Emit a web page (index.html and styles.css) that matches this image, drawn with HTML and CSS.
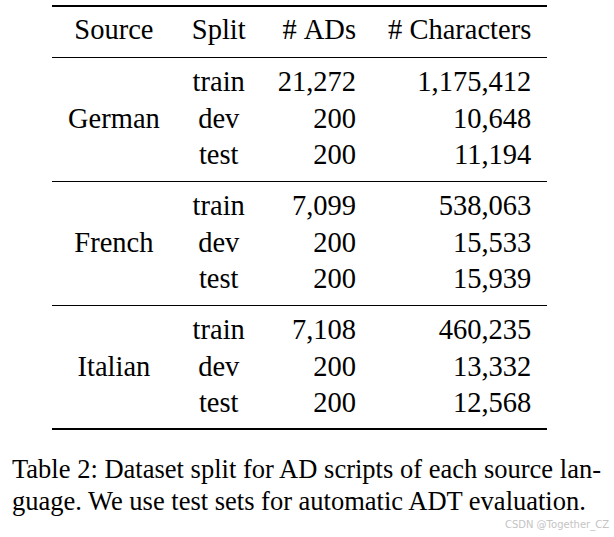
FILE: index.html
```html
<!DOCTYPE html>
<html>
<head>
<meta charset="utf-8">
<link rel="stylesheet" href="styles.css">
</head>
<body>
<div class="page">
  <table class="data">
    <thead>
      <tr><th class="c">Source</th><th class="c">Split</th><th class="r">#&nbsp;ADs</th><th class="r">#&nbsp;Characters</th></tr>
    </thead>
    <tbody>
      <tr class="first"><td class="c group" rowspan="3">German</td><td class="c">train</td><td class="r">21,272</td><td class="r">1,175,412</td></tr>
      <tr><td class="c">dev</td><td class="r">200</td><td class="r">10,648</td></tr>
      <tr class="last"><td class="c">test</td><td class="r">200</td><td class="r">11,194</td></tr>
    </tbody>
    <tbody>
      <tr class="first"><td class="c group" rowspan="3">French</td><td class="c">train</td><td class="r">7,099</td><td class="r">538,063</td></tr>
      <tr><td class="c">dev</td><td class="r">200</td><td class="r">15,533</td></tr>
      <tr class="last"><td class="c">test</td><td class="r">200</td><td class="r">15,939</td></tr>
    </tbody>
    <tbody class="end">
      <tr class="first"><td class="c group" rowspan="3">Italian</td><td class="c">train</td><td class="r">7,108</td><td class="r">460,235</td></tr>
      <tr><td class="c">dev</td><td class="r">200</td><td class="r">13,332</td></tr>
      <tr class="last"><td class="c">test</td><td class="r">200</td><td class="r">12,568</td></tr>
    </tbody>
  </table>
  <div class="caption">
    <div class="line1">Table 2: Dataset split for AD scripts of each source lan-</div>
    <div class="line2">guage. We use test sets for automatic ADT evaluation.</div>
  </div>
  <div class="mark">CSDN @Together_CZ</div>
</div>
</body>
</html>
```
FILE: styles.css
```css
html, body {
  margin: 0;
  padding: 0;
  background: #ffffff;
}
body {
  font-family: "Liberation Serif", serif;
}
.page {
  width: 614px;
  height: 537px;
  position: relative;
  font-family: "Liberation Serif", serif;
  color: #000;
}
.data {
  border-collapse: separate;
  border-spacing: 0;
  margin-left: 52px;
  margin-top: 5px;
  font-family: "Liberation Serif", serif;
  font-size: 28.5px;
  line-height: 36.5px;
}
.data th,
.data td {
  font-family: "Liberation Serif", serif;
  font-weight: normal;
  white-space: nowrap;
  padding: 0 16px;
}
.data thead th {
  border-top: 2px solid #000;
  border-bottom: 1px solid #000;
  padding-top: 5px;
  padding-bottom: 8.5px;
}
.data tr.first td {
  padding-top: 6px;
}
.data tr.last td {
  padding-bottom: 7.5px;
  border-bottom: 1px solid #000;
}
.data td.group {
  padding-top: 6px;
  padding-bottom: 7.5px;
  border-bottom: 1px solid #000;
  vertical-align: middle;
}
.data tbody.end tr.last td,
.data tbody.end td.group {
  padding-bottom: 6.5px;
  border-bottom: 2px solid #000;
}
.c { text-align: center; }
.r { text-align: right; }
.caption {
  margin-left: 12px;
  width: 589px;
  margin-top: 24px;
  font-family: "Liberation Serif", serif;
  font-size: 26.5px;
  line-height: 31.5px;
}
.line1 {
  text-align: justify;
  text-align-last: justify;
}
.mark {
  position: absolute;
  right: 5px;
  bottom: 11px;
  font-family: "DejaVu Sans", sans-serif;
  font-size: 10px;
  line-height: 12px;
  color: #c4c4c4;
}
```
